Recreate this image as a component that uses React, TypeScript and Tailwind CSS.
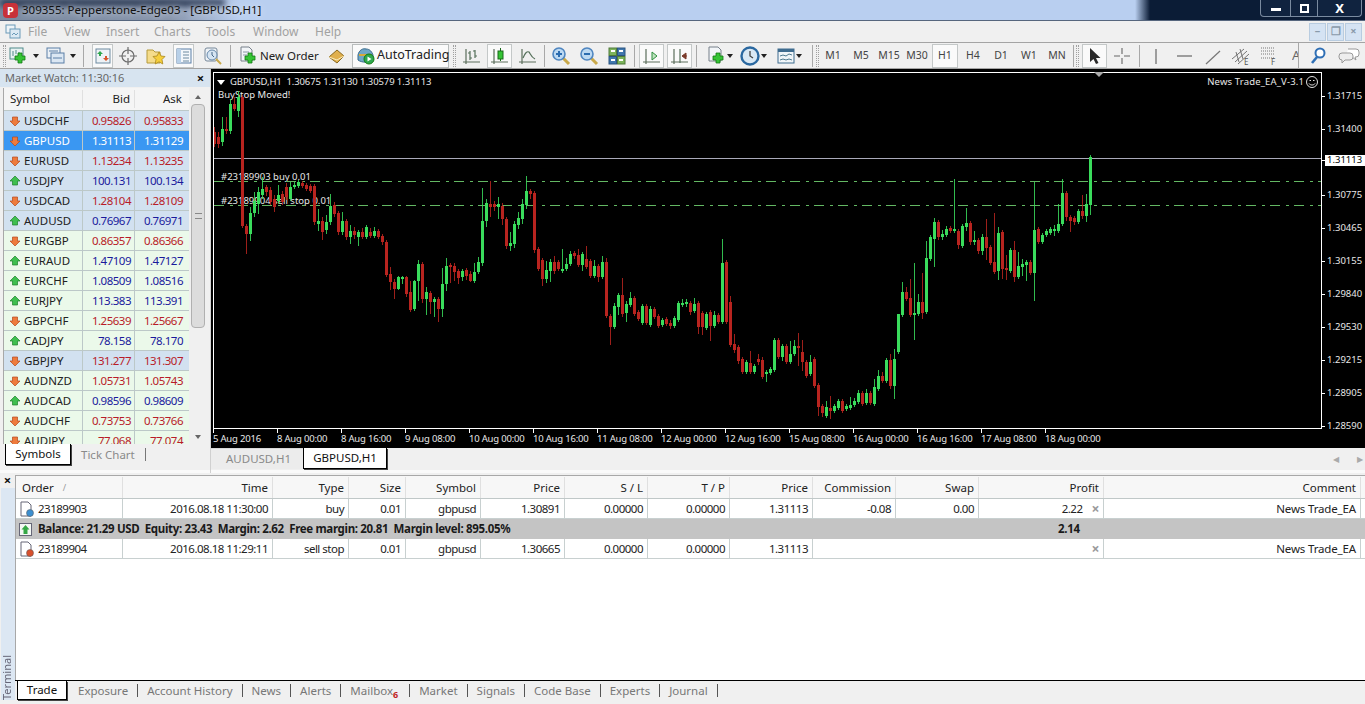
import type { ReactNode } from "react";

const FONT = "font-['Noto_Sans','Liberation_Sans',sans-serif]";

// c (1 green, 0 red), body top, body bottom, wick high, wick low: screen y, one candle every 4px from x=214
const CANDLES: number[][] = [
  [0,133,145,128,148],[0,138,145,133,149],[1,130,143,118,147],[0,130,132,118,135],[1,105,132,100,135],[0,105,110,98,112],[1,98,112,92,118],
  [0,98,227,96,229],[0,227,235,225,255],[1,214,235,208,242],[1,202,214,193,218],[1,193,205,188,215],[1,190,196,178,200],[0,188,193,186,197],
  [0,191,203,188,206],[0,200,208,196,213],[1,196,202,186,205],[0,195,203,192,206],[0,188,198,184,201],[1,188,200,183,202],[1,186,188,183,190],
  [1,183,187,181,189],[0,184,187,182,189],[0,186,190,184,192],[0,187,192,185,194],[0,187,223,185,226],[1,222,225,210,232],[0,222,233,218,241],
  [1,223,231,216,235],[1,207,223,195,226],[0,206,215,203,218],[0,214,233,212,236],[1,222,233,213,236],[0,222,238,220,241],[1,232,238,226,245],
  [0,232,236,228,240],[1,233,238,231,247],[0,233,238,229,240],[1,228,238,226,240],[0,233,237,229,239],[1,232,237,228,239],[0,232,238,230,240],
  [0,237,243,235,246],[0,243,276,241,278],[0,275,283,268,291],[0,283,290,280,300],[1,278,290,277,291],[1,278,280,277,285],[0,278,295,277,298],
  [0,293,311,282,313],[1,282,310,281,312],[1,265,282,261,302],[0,265,300,263,304],[1,293,300,288,316],[0,294,303,292,315],[1,300,303,298,318],
  [0,300,310,298,323],[1,285,310,269,318],[1,267,285,259,292],[0,266,268,264,284],[0,267,273,264,282],[0,272,279,270,285],[1,272,278,270,282],
  [0,271,277,269,281],[0,275,282,272,283],[1,273,282,264,284],[1,263,273,258,275],[1,222,264,189,267],[1,204,222,200,228],[0,205,208,182,218],
  [0,205,208,202,212],[1,205,208,198,220],[0,207,220,204,226],[0,220,247,218,250],[1,244,247,233,252],[1,225,245,222,249],[1,219,226,213,230],
  [1,205,220,200,225],[1,192,206,177,210],[0,192,195,190,200],[0,194,251,192,254],[0,250,270,248,272],
  [0,261,280,259,287],[1,271,280,262,284],[1,263,272,260,283],[0,263,272,257,275],[0,263,270,261,272],[1,270,271,250,274],[1,265,270,259,272],
  [1,255,265,252,267],[0,254,257,252,260],[0,256,266,250,268],[1,255,266,253,272],[0,260,268,247,270],[0,262,277,260,279],[1,267,277,261,279],
  [0,267,278,265,283],[1,263,278,257,280],[0,263,317,259,319],[0,317,328,315,346],[1,307,328,304,330],[1,296,308,294,316],[0,296,315,279,318],
  [1,305,314,302,323],[1,299,306,293,308],[0,299,315,297,317],[0,313,320,311,322],[1,307,324,305,326],[0,307,324,305,326],[1,310,326,307,328],
  [0,310,318,308,320],[0,317,327,315,329],[1,321,326,319,328],[0,320,325,318,327],[0,324,327,321,330],[1,319,327,317,329],[1,304,321,302,323],
  [1,304,306,300,308],[1,303,305,300,308],[0,304,313,302,316],[1,305,312,299,314],[0,304,328,302,335],[0,314,328,312,336],[1,315,329,313,331],
  [0,313,327,311,342],[1,316,327,312,329],[0,316,323,314,325],[1,264,323,240,325],[0,263,323,261,325],[0,303,346,297,348],[0,345,351,335,354],
  [0,348,362,346,365],[0,360,373,358,375],[1,363,373,361,375],[0,364,373,352,375],[1,367,373,365,375],[0,360,363,355,366],[0,361,378,358,380],
  [1,373,375,371,383],[1,370,374,368,376],[1,341,371,339,373],[0,341,358,339,360],[1,347,358,345,362],[0,347,363,345,365],[1,355,363,342,365],
  [1,347,355,341,357],[0,347,348,334,367],[0,353,363,341,372],[0,363,377,361,379],[1,363,375,356,377],[0,360,387,358,389],[0,386,408,384,417],
  [0,407,414,405,418],[1,408,417,402,419],[0,409,412,397,420],[1,407,412,405,414],[1,402,409,400,411],[0,402,412,400,414],[1,407,410,405,412],
  [1,406,409,398,411],[1,402,406,399,408],[1,394,403,391,405],[0,394,405,392,407],[1,394,404,390,406],[0,394,404,392,406],[1,388,405,380,407],
  [1,377,390,371,392],[0,377,382,373,384],[1,361,382,359,384],[0,361,387,355,390],[1,360,387,350,400],[1,315,353,341,355],[1,293,316,283,318],
  [0,293,300,288,302],[0,299,316,280,318],[1,314,316,264,341],[1,303,315,295,317],[0,303,314,274,320],[1,259,313,242,315],[1,238,260,236,262],
  [1,223,240,219,268],[0,223,238,221,241],[1,235,238,231,241],[1,230,236,227,238],[0,229,232,227,234],[1,230,232,180,234],[0,232,246,230,250],
  [1,227,247,225,249],[1,224,228,209,232],[0,224,243,222,246],[1,241,243,232,246],[0,241,252,239,255],[1,238,252,235,256],[0,238,249,220,261],
  [0,248,264,246,266],[0,263,273,214,275],[1,234,272,228,281],[0,233,270,231,280],[0,269,271,256,281],[1,251,272,249,274],[0,251,278,242,283],
  [1,267,278,253,280],[1,265,268,260,277],[1,263,266,261,282],[0,263,274,261,276],[1,231,274,183,302],[0,230,243,228,245],[1,236,243,234,245],
  [1,232,236,230,238],[1,230,234,228,236],[1,230,231,226,237],[1,225,232,205,234],[1,194,225,180,227],[0,194,218,192,222],[0,218,222,216,233],
  [0,219,223,217,226],[1,212,223,210,225],[0,212,217,196,220],[1,205,217,195,223],[1,158,206,156,216],
];

const PRICES: [string, boolean][] = [
  ["1.31715", false], ["1.31400", false], ["1.31113", true], ["1.30775", false], ["1.30465", false], ["1.30155", false],
  ["1.29840", false], ["1.29530", false], ["1.29215", false], ["1.28905", false], ["1.28590", false],
];

const TIMES = ["5 Aug 2016", "8 Aug 00:00", "8 Aug 16:00", "9 Aug 08:00", "10 Aug 00:00", "10 Aug 16:00", "11 Aug 08:00", "12 Aug 00:00", "12 Aug 16:00", "15 Aug 08:00", "16 Aug 00:00", "16 Aug 16:00", "17 Aug 08:00", "18 Aug 00:00"];

const QUOTES: { s: string; bid: string; ask: string; up: boolean; major: boolean; sel?: boolean }[] = [
  { s: "USDCHF", bid: "0.95826", ask: "0.95833", up: false, major: true },
  { s: "GBPUSD", bid: "1.31113", ask: "1.31129", up: false, major: true, sel: true },
  { s: "EURUSD", bid: "1.13234", ask: "1.13235", up: false, major: true },
  { s: "USDJPY", bid: "100.131", ask: "100.134", up: true, major: true },
  { s: "USDCAD", bid: "1.28104", ask: "1.28109", up: false, major: true },
  { s: "AUDUSD", bid: "0.76967", ask: "0.76971", up: true, major: true },
  { s: "EURGBP", bid: "0.86357", ask: "0.86366", up: false, major: false },
  { s: "EURAUD", bid: "1.47109", ask: "1.47127", up: true, major: false },
  { s: "EURCHF", bid: "1.08509", ask: "1.08516", up: true, major: false },
  { s: "EURJPY", bid: "113.383", ask: "113.391", up: true, major: false },
  { s: "GBPCHF", bid: "1.25639", ask: "1.25667", up: false, major: false },
  { s: "CADJPY", bid: "78.158", ask: "78.170", up: true, major: false },
  { s: "GBPJPY", bid: "131.277", ask: "131.307", up: false, major: true },
  { s: "AUDNZD", bid: "1.05731", ask: "1.05743", up: false, major: false },
  { s: "AUDCAD", bid: "0.98596", ask: "0.98609", up: true, major: false },
  { s: "AUDCHF", bid: "0.73753", ask: "0.73766", up: false, major: false },
  { s: "AUDJPY", bid: "77.068", ask: "77.074", up: false, major: false },
];

// [label, width and align]
const COLS: [string, string][] = [
  ["Order", "w-[107px] justify-start"], ["Time", "w-[150px] justify-end"], ["Type", "w-[76px] justify-end"], ["Size", "w-[57px] justify-end"],
  ["Symbol", "w-[75px] justify-end"], ["Price", "w-[84px] justify-end"], ["S / L", "w-[83px] justify-end"], ["T / P", "w-[82px] justify-end"],
  ["Price", "w-[83px] justify-end"], ["Commission", "w-[83px] justify-end"], ["Swap", "w-[83px] justify-end"], ["Profit", "w-[125px] justify-end"],
  ["Comment", "w-[257px] justify-end"],
];

function Svg({ w = 20, h = 20, children }: { w?: number; h?: number; children: ReactNode }) {
  return (
    <svg width={w} height={h} viewBox={`0 0 ${w} ${h}`} fill="none" className="shrink-0">
      {children}
    </svg>
  );
}

const Plus = ({ x = 9, y = 9 }: { x?: number; y?: number }) => (
  <path
    d={`M${x + 3} ${y}h4v3h3v4h-3v3h-4v-3h-3v-4h3z`}
    fill="#35c435"
    stroke="#127a12"
    strokeWidth="0.8"
  />
);

const Axes = () => <path d="M4 3v15M1 16h17" stroke="#5c6e5c" strokeWidth="1.2" />;

const Caret = () => <span className="ml-[1px] h-0 w-0 border-x-[3px] border-t-[4px] border-x-transparent border-t-[#222]" />;

function Lens({ minus }: { minus?: boolean }) {
  return (
    <Svg>
      <path d="M12 12l6 6" stroke="#c9a94a" strokeWidth="3" />
      <circle cx="8" cy="8" r="6" fill="#bcd9f2" stroke="#4f86c0" strokeWidth="1.6" />
      <path d={minus ? "M5 8h6" : "M5 8h6M8 5v6"} stroke="#2b6cb0" strokeWidth="2" />
    </Svg>
  );
}

function Btn({ on, w = "w-[24px]", m = "", children }: { on?: boolean; w?: string; m?: string; children: ReactNode }) {
  return (
    <div className={`flex h-[24px] shrink-0 items-center justify-center ${w} ${m} ${on ? "border border-[#c4c8c8] bg-[#fafafa]" : ""}`}>
      {children}
    </div>
  );
}

const Sep = ({ m = "mx-[4px]" }: { m?: string }) => <div className={`h-[22px] w-px shrink-0 bg-[#a8a8a8] ${m}`} />;
const Grip = ({ m = "mx-[2px]" }: { m?: string }) => <div className={`h-[22px] w-[3px] shrink-0 border-x border-dotted border-[#a0a0a0] ${m}`} />;

function Toolbar() {
  return (
    <div className="flex h-[27px] shrink-0 items-center border-y border-[#a4a4a4] bg-[#f0f0f0] pl-[1px] text-[12px] text-[#222]">
      <Grip m="ml-[2px]" />
      <Btn w="w-[34px]" m="ml-[1px]">
        <Svg>
          <rect x="1" y="2" width="13" height="11" fill="#e8f2f2" stroke="#4f8a8a" />
          <path d="M4 5v5M7 4v4M10 6v4" stroke="#4f8a8a" />
          <Plus x={6} y={7} />
        </Svg>
        <span className="w-[3px]" />
        <Caret />
      </Btn>
      <Btn w="w-[34px]" m="ml-[3px]">
        <Svg>
          <rect x="1" y="2" width="13" height="10" fill="#eaf0f6" stroke="#5a7ea6" />
          <rect x="5" y="7" width="13" height="10" fill="#dbe7f3" stroke="#5a7ea6" />
          <path d="M7 12h9M3 5h9" stroke="#5a7ea6" />
        </Svg>
        <span className="w-[3px]" />
        <Caret />
      </Btn>
      <Sep m="ml-[5px] mr-[7px]" />
      <Btn on w="w-[21px]" m="ml-px mr-[2px]">
        <Svg w={16} h={16}>
          <rect x="1" y="1" width="14" height="14" fill="#eef3f6" stroke="#6d8aa0" />
          <path d="M5 3l3 3H6v2H4V6H2z" fill="#2fa84f" />
          <path d="M11 13l3-3h-2V8h-2v2H8z" fill="#d9562b" />
        </Svg>
      </Btn>
      <Btn m="mx-[1px]">
        <Svg>
          <circle cx="10" cy="10" r="6" stroke="#6c6c6c" strokeWidth="1.2" />
          <path d="M10 1v7M10 12v7M1 10h7M12 10h7" stroke="#6c6c6c" strokeWidth="1.2" />
        </Svg>
      </Btn>
      <Btn m="mx-[3px]">
        <Svg>
          <path d="M1 4h6l2 2h5v11H1z" fill="#f5dc8a" stroke="#b59a3c" />
          <path d="M13 6l2 4 4 .5-3 3 .8 4.500-3.800-2.200-3.800 2.200.8-4.500-3-3 4-.5z" fill="#f6cf3c" stroke="#a9861c" strokeWidth=".8" />
        </Svg>
      </Btn>
      <Btn on w="w-[21px]" m="ml-[2px]">
        <Svg w={16} h={16}>
          <rect x="1" y="1" width="14" height="14" fill="#f3f7fb" stroke="#5a7ea6" />
          <path d="M1 1h4v14H1z" fill="#b8d0e8" />
          <path d="M7 4h6M7 7h6M7 10h6M7 13h6" stroke="#6d8aa0" />
        </Svg>
      </Btn>
      <Btn m="ml-[7px] mr-[5px]">
        <Svg>
          <rect x="2" y="2" width="12" height="13" rx="2" stroke="#77889a" fill="#eef2f6" />
          <circle cx="9" cy="9" r="5" fill="#d6e5f3" stroke="#6688aa" />
          <path d="M9 6v3l2 2" stroke="#446688" />
          <path d="M13 13l5 5" stroke="#c9a94a" strokeWidth="2" />
        </Svg>
      </Btn>
      <Sep m="mr-[8px]" />
      <Svg w={19} h={20}>
        <path d="M2 1h8l3 3v11H2z" fill="#f2f5f8" stroke="#77808a" />
        <path d="M4 6h6M4 9h4" stroke="#8a96a2" />
        <Plus x={6} y={7} />
      </Svg>
      <span className="ml-[2px] w-[67px] shrink-0 whitespace-nowrap text-[11.5px] leading-none">New Order</span>
      <Svg w={19} h={18}>
        <path d="M2 10L10 3l7 6-7 7z" fill="#e0b04e" stroke="#8a6a20" />
        <path d="M2 10l8 3 7-4" stroke="#fbeec2" />
      </Svg>
      <div className="ml-[6px] flex h-[24px] w-[97px] shrink-0 items-center border border-[#b8bcbc] bg-[#fafafa] pl-[3px] text-[12.5px]">
        <Svg w={19} h={19}>
          <path d="M2 9c1-5 5-7 8-6 4 0 6 3 7 6v5c-3 3-11 3-15 0z" fill="#6fa6c8" stroke="#3a6a8a" />
          <path d="M3 9h13" stroke="#d8a93a" strokeWidth="2" />
          <circle cx="13" cy="13" r="5" fill="#2fa84f" stroke="#127a12" />
          <path d="M11.500 10.500v5l4-2.500z" fill="#fff" />
        </Svg>
        <span className="ml-[2px] leading-none">AutoTrading</span>
      </div>
      <Grip m="ml-[4px]" />
      <Btn m="ml-[4px] mr-[3px]">
        <Svg>
          <Axes />
          <path d="M8 5v9M8 7h-2M8 12h2M13 4v8M13 5h-2M13 10h2" stroke="#55705a" strokeWidth="1.2" />
        </Svg>
      </Btn>
      <Btn on w="w-[25px]">
        <Svg>
          <Axes />
          <rect x="8" y="5" width="5" height="8" fill="#35c435" stroke="#1a6a1a" />
          <path d="M10.500 2v3M10.500 13v2" stroke="#1a6a1a" />
        </Svg>
      </Btn>
      <Btn m="ml-[4px]">
        <Svg>
          <Axes />
          <path d="M5 12c2-5 4-7 6-6 1 1 2 5 6 7" stroke="#55705a" strokeWidth="1.2" />
        </Svg>
      </Btn>
      <Sep />
      <Btn m="mr-[2px]"><Lens /></Btn>
      <Btn m="mx-[2px]"><Lens minus /></Btn>
      <Btn m="ml-[2px] mr-[1px]">
        <Svg w={18} h={18}>
          <rect x="1" y="1" width="7.500" height="7.500" fill="#7cb35a" stroke="#4f7a3a" />
          <rect x="9.500" y="1" width="7.500" height="7.500" fill="#3f76ad" stroke="#2a5480" />
          <rect x="1" y="9.500" width="7.500" height="7.500" fill="#3f76ad" stroke="#2a5480" />
          <rect x="9.500" y="9.500" width="7.500" height="7.500" fill="#7cb35a" stroke="#4f7a3a" />
          <path d="M3 4h4M11 4h4M3 13h4M11 13h4" stroke="#fff" strokeWidth="2" />
        </Svg>
      </Btn>
      <Sep />
      <Btn on w="w-[25px]" m="mr-[3px]">
        <Svg>
          <Axes />
          <path d="M10 6v8l5-4z" fill="#bfe3bf" stroke="#2f8f3f" />
        </Svg>
      </Btn>
      <Btn on w="w-[25px]">
        <Svg>
          <Axes />
          <path d="M10 3v14" stroke="#55705a" strokeWidth="1.2" />
          <path d="M17 10h-3M16 7l-4 3 4 3z" fill="#7a3a2a" stroke="#7a3a2a" />
        </Svg>
      </Btn>
      <Sep />
      <Btn w="w-[30px]" m="ml-[4px]">
        <Svg w={19} h={20}>
          <path d="M2 1h9l3 3v11H2z" fill="#f2f5f8" stroke="#77808a" />
          <Plus x={6} y={7} />
        </Svg>
        <Caret />
      </Btn>
      <Btn w="w-[27px]" m="ml-[5px]">
        <Svg>
          <circle cx="10" cy="10" r="8.500" fill="#d9e8f4" stroke="#2a68a0" strokeWidth="2.400" />
          <path d="M10 5v5l3 2" stroke="#444" strokeWidth="1.300" />
        </Svg>
        <Caret />
      </Btn>
      <Btn w="w-[25px]" m="ml-[10px] mr-[10px]">
        <Svg w={18} h={18}>
          <rect x="1" y="2" width="16" height="14" fill="#f0f5f8" stroke="#3f6c8f" />
          <path d="M1 2h16v3H1z" fill="#3f6c8f" />
          <path d="M3 9l3-1 3 1 3-2 3 1M3 13l3-1 3 1 3-1 3 1" stroke="#4f7a8f" />
        </Svg>
        <Caret />
      </Btn>
      <Sep m="mr-[1px]" />
      <Grip m="ml-[2px]" />
      {["M1", "M5", "M15", "M30", "H1", "H4", "D1", "W1", "MN"].map((t) => (
        <div key={t} className={`mx-px flex h-[24px] w-[26px] shrink-0 items-center justify-center text-[10.5px] text-[#444] ${t === "H1" ? "border border-[#c4c8c8] bg-[#fafafa]" : ""}`}>
          {t}
        </div>
      ))}
      <Sep m="ml-[2px] mr-[1px]" />
      <Grip m="ml-[1px]" />
      <Btn on w="w-[25px]" m="ml-[3px]">
        <Svg w={16} h={18}>
          <path d="M3 1v14l3.500-3 2.500 5 2.500-1-2.500-5h4.500z" fill="#2a2a2a" />
        </Svg>
      </Btn>
      <Btn m="ml-[3px]">
        <Svg>
          <path d="M10 2v6M10 12v6M2 10h6M12 10h6" stroke="#666" strokeWidth="1.100" />
        </Svg>
      </Btn>
      <Sep m="ml-[5px] mr-[4px]" />
      <Btn><Svg><path d="M10 3v15" stroke="#666" strokeWidth="1.200" /></Svg></Btn>
      <Btn m="ml-[5px]"><Svg><path d="M2 10h15" stroke="#666" strokeWidth="1.200" /></Svg></Btn>
      <Btn m="ml-[4px]"><Svg><path d="M3 18L17 5" stroke="#777" strokeWidth="1.200" /></Svg></Btn>
      <Btn m="ml-[4px]">
        <Svg>
          <path d="M1 13L13 3M4 16L16 5M7 18L18 8M5 6l3 10M9 3l3 10" stroke="#666" strokeWidth=".9" />
          <text x="13" y="19" fontSize="8" fill="#555">E</text>
        </Svg>
      </Btn>
      <Btn m="ml-[3px]">
        <Svg>
          <path d="M3 2h13M3 5h13M3 8h13M3 12h13" stroke="#777" strokeDasharray="1 1" />
          <text x="13" y="19" fontSize="8" fill="#555">F</text>
        </Svg>
      </Btn>
      <div className="ml-[12px] flex h-[24px] w-[6px] shrink-0 items-center overflow-hidden text-[13px] text-[#666]">A</div>
      <div className="h-[26px] w-px shrink-0 bg-[#a8a8a8]" />
      <div className="ml-[11px] shrink-0">
        <Svg w={16} h={18}>
          <circle cx="10" cy="6" r="4.500" stroke="#2f6fb5" strokeWidth="2" fill="#fff" />
          <path d="M7 10l-5 6" stroke="#2f6fb5" strokeWidth="2.600" />
        </Svg>
      </div>
      <div className="ml-[12px] shrink-0">
        <Svg w={22} h={18}>
          <path d="M10 2h8a3 3 0 013 3v2a3 3 0 01-3 3h-1l1 3-4-3H8" fill="#fff" stroke="#999" />
          <path d="M4 6h8a3 3 0 013 3v1a3 3 0 01-3 3H7l-3 3v-3a3 3 0 01-3-3V9a3 3 0 013-3z" fill="#eee" stroke="#999" />
        </Svg>
      </div>
    </div>
  );
}

function Arrow({ up }: { up: boolean }) {
  return (
    <Svg w={12} h={12}>
      {up ? (
        <path d="M6 1l5 5H8.500v4h-5V6H1z" fill="#3fbf4f" stroke="#1c7f2c" strokeWidth=".7" />
      ) : (
        <path d="M6 11l5-5H8.500V2h-5v4H1z" fill="#ee7b3c" stroke="#b5481c" strokeWidth=".7" />
      )}
    </Svg>
  );
}

function MarketWatch() {
  return (
    <div className="flex h-[404px] w-[211px] shrink-0 flex-col overflow-hidden border-r border-[#d0d0d0] bg-[#f0f0f0] text-[11.5px]">
      <div className="flex h-[18px] shrink-0 items-center justify-between bg-[#d7e4f0] pl-[5px] pr-[6px] text-[11px] tracking-[-0.1px] text-[#666]">
        <span>Market Watch: 11:30:16</span>
        <span className="text-[13px] font-bold leading-none text-[#111]">×</span>
      </div>
      <div className="flex h-[357px] shrink-0 pl-[3px] pt-px">
        <div className="flex min-h-0 w-[186px] flex-col overflow-hidden border-l border-[#a8a8a8]">
          <div className="flex h-[22px] shrink-0 items-center bg-[#f5f5f5] text-[#222]">
            <span className="w-[78px] pl-[6px]">Symbol</span>
            <span className="w-[52px] border-l border-[#e0e0e0] pr-[4px] text-right">Bid</span>
            <span className="w-[54px] border-l border-[#e0e0e0] pr-[6px] text-right">Ask</span>
          </div>
          {QUOTES.map((q) => {
            const price = q.sel ? "text-white" : q.up ? "text-[#1a1a9c]" : "text-[#b81c28]";
            const bg = q.sel ? "bg-[#3a97f2]" : q.major ? "bg-[#d2e1f0]" : "bg-[#ebf9ea]";
            return (
              <div key={q.s} className={`flex h-[20px] shrink-0 items-center border-t border-[#bcc8c8] ${bg}`}>
                <span className={`flex h-full w-[78px] items-center gap-[3px] pl-[5px] ${q.sel ? "text-white" : "text-[#222]"}`}>
                  <Arrow up={q.up} />
                  {q.s}
                </span>
                <span className={`h-full w-[52px] border-l border-[#bcc8c8] pr-[3px] text-right leading-[19px] tracking-[-0.5px] ${price}`}>{q.bid}</span>
                <span className={`h-full w-[54px] border-l border-[#bcc8c8] pr-[5px] text-right leading-[19px] tracking-[-0.5px] ${price}`}>{q.ask}</span>
              </div>
            );
          })}
        </div>
        <div className="ml-[1px] flex h-[356px] w-[16px] flex-col items-center bg-[#f0f0f0] pt-[7px]">
          <span className="h-0 w-0 border-x-[3px] border-b-[4px] border-x-transparent border-b-[#666]" />
          <div className="mt-[5px] flex h-[224px] w-[14px] shrink-0 items-center justify-center rounded-sm border border-[#b0b0b0] bg-[#dcdcdc]">
            <span className="h-[6px] w-[7px] border-y border-[#888]" />
          </div>
          <span className="mb-[5px] mt-auto h-0 w-0 border-x-[3px] border-t-[4px] border-x-transparent border-t-[#666]" />
        </div>
      </div>
      <div className="flex min-h-0 flex-1 border-b-[3px] border-[#fafafa] pl-[5px]">
        <div className="flex h-[21px] w-[66px] items-center justify-center border-x border-b border-black bg-white text-[#111] shadow-[1px_1px_0_#444]">Symbols</div>
        <span className="ml-[10px] flex h-[21px] items-center text-[#8a8a8a]">Tick Chart</span>
        <span className="ml-[10px] mt-[4px] h-[13px] w-px bg-[#777]" />
      </div>
    </div>
  );
}

function Chart() {
  return (
    <div className="relative flex h-[379px] shrink-0 flex-col overflow-hidden bg-black pl-[2px] pt-[3px] text-[9.5px] text-[#e8e8e8]">
      <div className="flex h-[357px] shrink-0">
        <div className="relative w-[1109px] border border-white">
          <div className="absolute left-[3px] top-[2px] flex items-center gap-[2px] whitespace-nowrap tracking-[-0.1px]">
            <span className="h-0 w-0 border-x-[4px] border-t-[5px] border-x-transparent border-t-white" />
            <span className="ml-[3px]">GBPUSD,H1&nbsp; 1.30675 1.31130 1.30579 1.31113</span>
          </div>
          <span className="absolute left-[4px] top-[15px] whitespace-nowrap">BuyStop Moved!</span>
          <span className="absolute left-[7px] top-[97px] whitespace-nowrap">#23189903 buy 0.01</span>
          <span className="absolute left-[7px] top-[121px] whitespace-nowrap">#23189904 sell stop 0.01</span>
          <div className="absolute right-[3px] top-[2px] flex items-center gap-[2px] whitespace-nowrap tracking-[0.15px]">
            <span>News Trade_EA_V-3.1</span>
            <Svg w={12} h={12}>
              <circle cx="6" cy="6" r="5.500" stroke="#e0e0e0" />
              <path d="M3 7.500c1 2 5 2 6 0M3.500 4.500h1.500M7 4.500h1.500" stroke="#e0e0e0" />
            </Svg>
          </div>
          <svg width="1107" height="355" viewBox="214 74 1107 355" className="relative block">
            <path d="M214 182.500H1321M214 206.500H1321" stroke="#63b863" strokeDasharray="10 6 3 5" />
            <path d="M214 159.500H1321" stroke="#a9a9b9" />
            {CANDLES.map(([c, t, b, h, l], i) => {
              const x = 214 + i * 4;
              const col = c ? "#3adc5c" : "#b8241f";
              return (
                <g key={i}>
                  <path d={`M${x + 0.5} ${h}V${l}`} stroke={col} strokeOpacity=".85" />
                  <rect x={x - 1} y={t} width={3} height={Math.max(b - t, 2)} fill={col} />
                </g>
              );
            })}
          </svg>
          <span className="absolute left-[880px] top-[-1px] h-0 w-0 border-x-[5px] border-t-[5px] border-x-transparent border-t-[#aaa]" />
        </div>
        <div className="flex w-[44px] flex-col pt-[8px]">
          {PRICES.map(([p, hit]) => (
            <div key={p} className={`flex h-[33px] shrink-0 items-center ${hit ? "relative -top-[2px]" : ""}`}>
              <span className="h-px w-[3px] bg-white" />
              <span className={`flex h-[11px] w-[41px] items-center pl-[2px] ${hit ? "bg-white text-black" : ""}`}>{p}</span>
            </div>
          ))}
        </div>
      </div>
      <div className="flex">
        {TIMES.map((t) => (
          <div key={t} className="flex h-[19px] w-[64px] shrink-0 flex-col whitespace-nowrap tracking-[-0.2px]">
            <span className="h-[4px] w-px bg-white" />
            <span className="leading-[12px]">{t}</span>
          </div>
        ))}
      </div>
    </div>
  );
}

function Cell({ cls, children, flat }: { cls: string; children?: ReactNode; flat?: boolean }) {
  return (
    <div className={`flex h-full shrink-0 items-center pr-[4px] ${flat ? "" : "border-r border-[#c8d0d0]"} ${cls}`}>{children}</div>
  );
}

function Doc({ dot }: { dot: string }) {
  return (
    <Svg w={16} h={16}>
      <path d="M2 1h7l3 3v11H2z" fill="#fff" stroke="#667" />
      <circle cx="11" cy="12" r="3.500" fill={dot} stroke="#555" strokeWidth=".5" />
    </Svg>
  );
}

const Times = () => <span className="ml-[9px] text-[14px] font-bold leading-none text-[#9a9a9a]">×</span>;

function Row({ v, dot, profit, empty }: { v: string[]; dot: string; profit: string; empty?: boolean }) {
  return (
    <div className="flex h-[20px] shrink-0 items-center border-b border-[#c8d0d0] bg-white text-[11.5px] tracking-[-0.5px] text-[#222]">
      <Cell cls={COLS[0][1]}>
        <span className="mx-[3px]"><Doc dot={dot} /></span>
        {v[0]}
      </Cell>
      {v.slice(1, 11).map((t, i) => (
        <Cell key={i} cls={COLS[i + 1][1]} flat={empty && i >= 8}>{t}</Cell>
      ))}
      <Cell cls={COLS[11][1]}>{profit}<Times /></Cell>
      <Cell cls={`tracking-[-0.15px] ${COLS[12][1]}`}>News Trade_EA</Cell>
    </div>
  );
}

function Terminal() {
  return (
    <div className="flex min-h-0 flex-1 bg-[#f0f0f0]">
      <div className="flex w-[15px] shrink-0 flex-col items-center justify-between pb-[4px] pt-[2px]">
        <span className="text-[13px] font-bold leading-[10px] text-[#111]">×</span>
        <div className="flex h-[212px] w-[14px] items-end justify-center bg-[#dce7f3] text-[11px] text-[#667]">
          <span className="rotate-180 pb-[2px] [writing-mode:vertical-rl]">Terminal</span>
        </div>
      </div>
      <div className="flex min-h-0 flex-1 flex-col pt-[2px]">
        <div className="flex min-h-0 flex-1 flex-col border-l border-t border-[#a8a8a8] bg-white">
          <div className="flex h-[23px] shrink-0 items-center border-b border-[#c0c8c8] bg-[#f7f7f7] pt-px text-[11.5px] text-[#222]">
            {COLS.map(([label, cls], i) => (
              <div key={i} className={`flex h-full shrink-0 items-center border-r border-[#e0e0e0] pr-[4px] ${i === 0 ? "pl-[6px]" : ""} ${cls}`}>
                {label}
                {i === 0 && <span className="ml-[9px] text-[9px] text-[#999]">/</span>}
              </div>
            ))}
          </div>
          <Row v={["23189903", "2016.08.18 11:30:00", "buy", "0.01", "gbpusd", "1.30891", "0.00000", "0.00000", "1.31113", "-0.08", "0.00"]} dot="#3c8fd0" profit="2.22" />
          <div className="flex h-[20px] shrink-0 items-center bg-[#c4c4c4] text-[11.5px] font-bold tracking-[-0.33px] text-[#1a1a1a]">
            <span className="ml-[3px] mr-[6px]">
              <Svg w={13} h={13}>
                <rect x=".5" y=".5" width="12" height="12" fill="#f4f8f4" stroke="#667" />
                <path d="M6.500 2l4 4.500H8.500V11h-4V6.500h-2z" fill="#35a845" />
              </Svg>
            </span>
            <span className="w-[1020px] whitespace-pre">Balance: 21.29 USD  Equity: 23.43  Margin: 2.62  Free margin: 20.81  Margin level: 895.05%</span>
            <span>2.14</span>
          </div>
          <Row v={["23189904", "2016.08.18 11:29:11", "sell stop", "0.01", "gbpusd", "1.30665", "0.00000", "0.00000", "1.31113", "", ""]} dot="#d8502c" profit="" empty />
        </div>
        <div className="flex h-[24px] shrink-0 items-start border-t border-black bg-[#f0f0f0] pl-[2px] text-[11.5px] text-[#777]">
          <div className="flex h-[19px] w-[50px] items-center justify-center border-x border-b border-black bg-white text-[#111] shadow-[1px_1px_0_#444]">Trade</div>
          <div className="flex h-[19px] items-center pl-[11px]">
            {["Exposure", "Account History", "News", "Alerts", "Mailbox", "Market", "Signals", "Code Base", "Experts", "Journal"].map((t) => (
              <span key={t} className="flex items-center">
                {t}
                {t === "Mailbox" && <span className="relative top-[4px] mr-[2px] text-[9px] font-bold text-[#c02020]">6</span>}
                <span className="mx-[9px] h-[13px] w-px bg-[#555]" />
              </span>
            ))}
          </div>
        </div>
      </div>
    </div>
  );
}

export default function App() {
  return (
    <div className={`flex h-[704px] w-[1365px] flex-col overflow-hidden bg-[#f0f0f0] ${FONT}`}>
      <div className="relative flex h-[21px] shrink-0 items-center overflow-hidden border-b border-[#56667e] bg-[linear-gradient(90deg,#7a8aa0_0px,#8895ac_170px,#b9cff0_240px,#b9cff0_1135px,#0b1c36_1150px,#0b1c36_100%)] pl-[3px]">
        <div className="absolute left-0 top-0 h-[6px] w-[225px] bg-[#1a2844] blur-[3px]" />
        <span className="relative flex h-[15px] w-[15px] items-center justify-center rounded-[4px] bg-[#c8323a] text-[11px] font-bold leading-none text-white">P</span>
        <span className="relative ml-[4px] text-[11.5px] text-[#111] [text-shadow:0_0_6px_#e8ecf4]">309355: Pepperstone-Edge03 - [GBPUSD,H1]</span>
        <div className="absolute right-[3px] top-0 flex h-[17px] w-[102px] items-center rounded-b-[4px] border border-t-0 border-[#7a8ba0] bg-[#10233f]">
          <div className="flex h-full w-[30px] items-center justify-center border-r border-[#7a8ba0]">
            <span className="mt-[3px] h-[3px] w-[10px] bg-white" />
          </div>
          <div className="flex h-full w-[27px] items-center justify-center border-r border-[#7a8ba0]">
            <span className="h-[9px] w-[9px] border-2 border-white" />
          </div>
          <span className="flex-1 text-center text-[13px] font-bold leading-[15px] text-white">X</span>
        </div>
      </div>
      <div className="flex h-[21px] shrink-0 items-center bg-[#f0f0f0] pl-[5px] text-[12px] text-[#a2a2a2]">
        <Svg w={16} h={15}>
          <rect x="1" y="1" width="9" height="8" fill="#eef4f8" stroke="#6a9ab8" />
          <rect x="5" y="5" width="10" height="9" fill="#dbe9f3" stroke="#6a9ab8" />
          <path d="M7 11l2-2 2 2 2-2" stroke="#6a9ab8" />
        </Svg>
        <span className="ml-[7px] w-[36px]">File</span>
        <span className="w-[42px]">View</span>
        <span className="w-[48px]">Insert</span>
        <span className="w-[52px]">Charts</span>
        <span className="w-[47px]">Tools</span>
        <span className="w-[62px]">Window</span>
        <span>Help</span>
        <div className="ml-auto mr-[3px] flex gap-px">
          {["–", "❐", "×"].map((g) => (
            <span key={g} className="flex h-[18px] w-[17px] items-center justify-center border border-[#b8cce0] bg-[#d5e3f3] text-[11px] font-bold text-[#8a9aaa]">{g}</span>
          ))}
        </div>
      </div>
      <Toolbar />
      <div className="flex h-[404px] shrink-0">
        <MarketWatch />
        <div className="flex min-w-0 flex-1 flex-col">
          <Chart />
          <div className="flex h-[25px] shrink-0 border-b-[3px] border-[#fafafa] bg-[#f0f0f0] text-[11.5px]">
            <div className="flex h-[21px] w-[92px] items-center justify-center border-t border-[#d8d8d8] bg-[#ececec] pl-[3px] text-[#8a8a8a]">AUDUSD,H1</div>
            <div className="flex h-[21px] w-[84px] items-center justify-center border-x border-b border-black bg-white text-[#111] shadow-[1px_1px_0_#444]">GBPUSD,H1</div>
            <div className="ml-auto mr-[2px] flex h-[21px] items-center gap-[18px] text-[8px] text-[#aaa]">
              <span>◀</span>
              <span>▶</span>
            </div>
          </div>
        </div>
      </div>
      <Terminal />
    </div>
  );
}
